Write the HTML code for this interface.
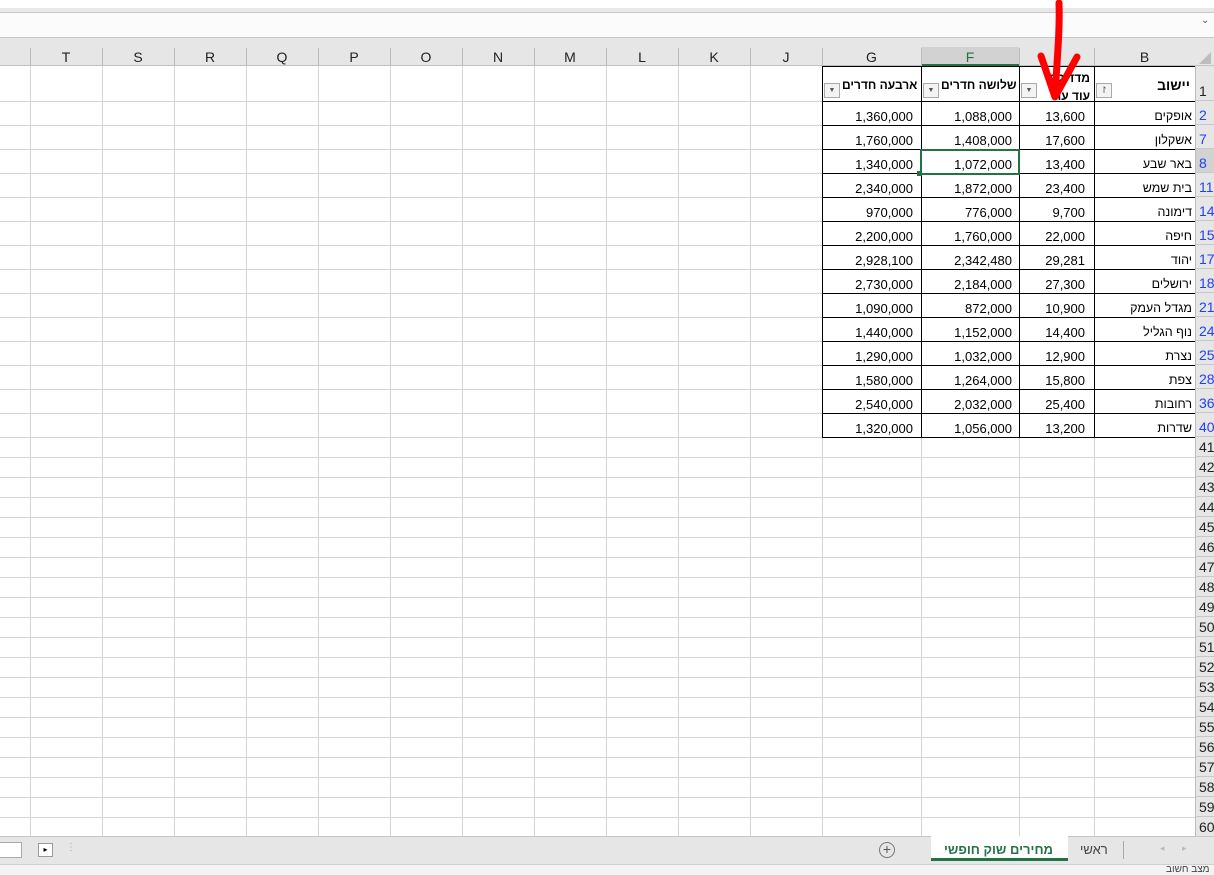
<!DOCTYPE html>
<html><head><meta charset="utf-8"><style>
body{margin:0;width:1214px;height:875px;overflow:hidden;background:#fff;position:relative;font-family:"Liberation Sans",Arial,sans-serif;font-size:12.5px;color:#000}
div{position:absolute;box-sizing:border-box}
.t{white-space:nowrap}
</style></head><body>
<div style="left:0;top:8px;width:1214px;height:4px;background:#e8e8e8"></div>
<div style="left:0;top:12px;width:1214px;height:26px;background:#fbfbfb;border-top:1px solid #c8c8c8;border-bottom:1px solid #c8c8c8"></div>
<div class="t" style="left:1201px;top:15px;font-size:10px;color:#555">⌄</div>
<div style="left:0;top:38px;width:1214px;height:28px;background:#e6e6e6;border-bottom:1px solid #c0c0c0"></div>
<div style="left:921px;top:47px;width:98px;height:19px;background:#d2d2d2;border-bottom:2px solid #217346"></div>
<div id="g"></div>
<svg style="position:absolute;left:1195px;top:50px" width="18" height="16"><polygon points="16,2 16,14 4,14" fill="#bdbdbd"/></svg>
<div style="left:0;top:836px;width:1214px;height:28px;background:#e6e6e6;border-top:1px solid #c6c6c6"></div>
<div style="left:931px;top:836px;width:137px;height:25px;background:#fff;border-bottom:3px solid #217346"></div>
<div class="t" style="left:944px;top:842px;font-weight:bold;color:#217346;font-size:13px;font-family:'Liberation Sans','DejaVu Sans',sans-serif">מחירים שוק חופשי</div>
<div class="t" style="left:1080px;top:842px;color:#444;font-size:13px">ראשי</div>
<div style="left:1123px;top:841px;width:1px;height:18px;background:#aaa"></div>
<div class="t" style="left:1160px;top:843px;color:#bbb;font-size:9px">◂&nbsp;&nbsp;&nbsp;&nbsp;&nbsp;&nbsp;&nbsp;▸</div>
<div style="left:879px;top:842px;width:16px;height:16px;border:1px solid #777;border-radius:50%;text-align:center;line-height:13px;color:#555;font-size:14px">+</div>
<div style="left:0;top:842px;width:22px;height:16px;background:#fff;border:1px solid #aaa;border-left:none"></div>
<div style="left:38px;top:843px;width:15px;height:14px;background:#fff;border:1px solid #999;font-size:8px;text-align:center;line-height:12px">▸</div>
<div class="t" style="left:66px;top:842px;color:#aaa;font-size:10px">⋮</div>
<div style="left:0;top:864px;width:1214px;height:11px;background:#f3f3f3;border-top:1px solid #d0d0d0"></div>
<div class="t" style="left:1166px;top:865px;font-size:10px;color:#444;line-height:10px">מצב חשוב</div>
<svg style="position:absolute;left:0;top:0" width="1214" height="875"><g fill="none" stroke="#f00" stroke-width="7" stroke-linecap="round" stroke-linejoin="round"><path d="M1059 3 C1060 30 1057 60 1055 96"/><path d="M1041 56 L1055 97 L1077 57"/></g></svg>
<script>
var g=document.getElementById('g'),h='';
var cols=[0,30,102,174,246,318,390,462,534,606,678,750,822,921,1019,1094,1195];
var names=['','T','S','R','Q','P','O','N','M','L','K','J','G','F','E','B'];
for(var i=1;i<cols.length-1;i++){h+='<div style="left:'+cols[i]+'px;top:48px;width:1px;height:18px;background:#bdbdbd"></div>';}
for(var i=0;i<names.length;i++){if(names[i]&&names[i]!='E')h+='<div class="t" style="left:'+cols[i]+'px;top:49px;width:'+(cols[i+1]-cols[i])+'px;text-align:center;font-size:14px;color:'+(names[i]=='F'?'#217346':'#222')+'">'+names[i]+'</div>';}
var rows=[66,101];for(var r=0;r<14;r++)rows.push(101+24*(r+1));for(var r=0;r<20;r++)rows.push(437+20*(r+1));
for(var i=1;i<cols.length-1;i++){h+='<div style="left:'+cols[i]+'px;top:66px;width:1px;height:771px;background:#d4d4d4"></div>';}
for(var j=1;j<rows.length;j++){h+='<div style="left:0;top:'+rows[j]+'px;width:1195px;height:1px;background:#d4d4d4"></div>';}
h+='<div style="left:1195px;top:66px;width:19px;height:771px;background:#e6e6e6;border-left:1px solid #bdbdbd"></div>';
var nums=[1,2,7,8,11,14,15,17,18,21,24,25,28,36,40];for(var n=41;n<=60;n++)nums.push(n);
for(var j=0;j<nums.length;j++){var yy=rows[j],hh=rows[j+1]-rows[j];h+='<div class="t" style="left:1196px;top:'+yy+'px;width:18px;height:'+hh+'px;overflow:hidden;border-bottom:1px solid #c8c8c8;padding-left:3px;padding-top:'+(hh-18)+'px;font-size:14px;color:'+(j>0&&j<15?'#1f3fff':'#222')+(j==3?';background:#d2d2d2':'')+'">'+nums[j]+'</div>';}
h+='<div style="left:822px;top:66px;width:373px;height:372px;border:1px solid #000;border-right:none"></div>';
[921,1019,1094].forEach(function(x){h+='<div style="left:'+x+'px;top:66px;width:1px;height:372px;background:#000"></div>';});
for(var j=1;j<16;j++)h+='<div style="left:822px;top:'+rows[j]+'px;width:373px;height:1px;background:#000"></div>';
function dd(x){return '<div style="left:'+x+'px;top:83px;width:16px;height:15px;background:#f3f3f3;border:1px solid #aaa;font-size:7px;color:#555;text-align:center;line-height:13px">▼</div>';}
h+=dd(824)+dd(923)+dd(1021);
h+='<div style="left:1096px;top:83px;width:16px;height:15px;background:#f3f3f3;border:1px solid #aaa;font-size:9px;color:#555;text-align:center;line-height:13px">↾</div>';
h+='<div class="t" style="left:842px;top:78px;font-weight:bold;font-size:12px">ארבעה חדרים</div>';
h+='<div class="t" style="left:941px;top:78px;font-weight:bold;font-size:12px">שלושה חדרים</div>';
h+='<div class="t" style="left:1030px;top:69px;width:60px;text-align:right;font-weight:bold;font-size:12px;line-height:18px">מדד לפי<br>עוד עוד</div>';
h+='<div class="t" style="left:1110px;top:77px;width:80px;text-align:right;font-weight:bold;font-size:14px">יישוב</div>';
var d=[['אופקים','13,600','1,088,000','1,360,000'],['אשקלון','17,600','1,408,000','1,760,000'],['באר שבע','13,400','1,072,000','1,340,000'],['בית שמש','23,400','1,872,000','2,340,000'],['דימונה','9,700','776,000','970,000'],['חיפה','22,000','1,760,000','2,200,000'],['יהוד','29,281','2,342,480','2,928,100'],['ירושלים','27,300','2,184,000','2,730,000'],['מגדל העמק','10,900','872,000','1,090,000'],['נוף הגליל','14,400','1,152,000','1,440,000'],['נצרת','12,900','1,032,000','1,290,000'],['צפת','15,800','1,264,000','1,580,000'],['רחובות','25,400','2,032,000','2,540,000'],['שדרות','13,200','1,056,000','1,320,000']];
for(var r=0;r<14;r++){var y=101+24*r+8;
h+='<div class="t" style="left:1096px;top:'+y+'px;width:96px;text-align:right">'+d[r][0]+'</div>';
h+='<div class="t" style="left:1019px;top:'+y+'px;width:66px;text-align:right;font-size:13px">'+d[r][1]+'</div>';
h+='<div class="t" style="left:921px;top:'+y+'px;width:91px;text-align:right;font-size:13px">'+d[r][2]+'</div>';
h+='<div class="t" style="left:822px;top:'+y+'px;width:91px;text-align:right;font-size:13px">'+d[r][3]+'</div>';}
h+='<div style="left:920px;top:149px;width:100px;height:26px;border:2px solid #217346"></div><div style="left:917px;top:171px;width:5px;height:5px;background:#217346"></div>';
g.innerHTML=h;
</script>
</body></html>
